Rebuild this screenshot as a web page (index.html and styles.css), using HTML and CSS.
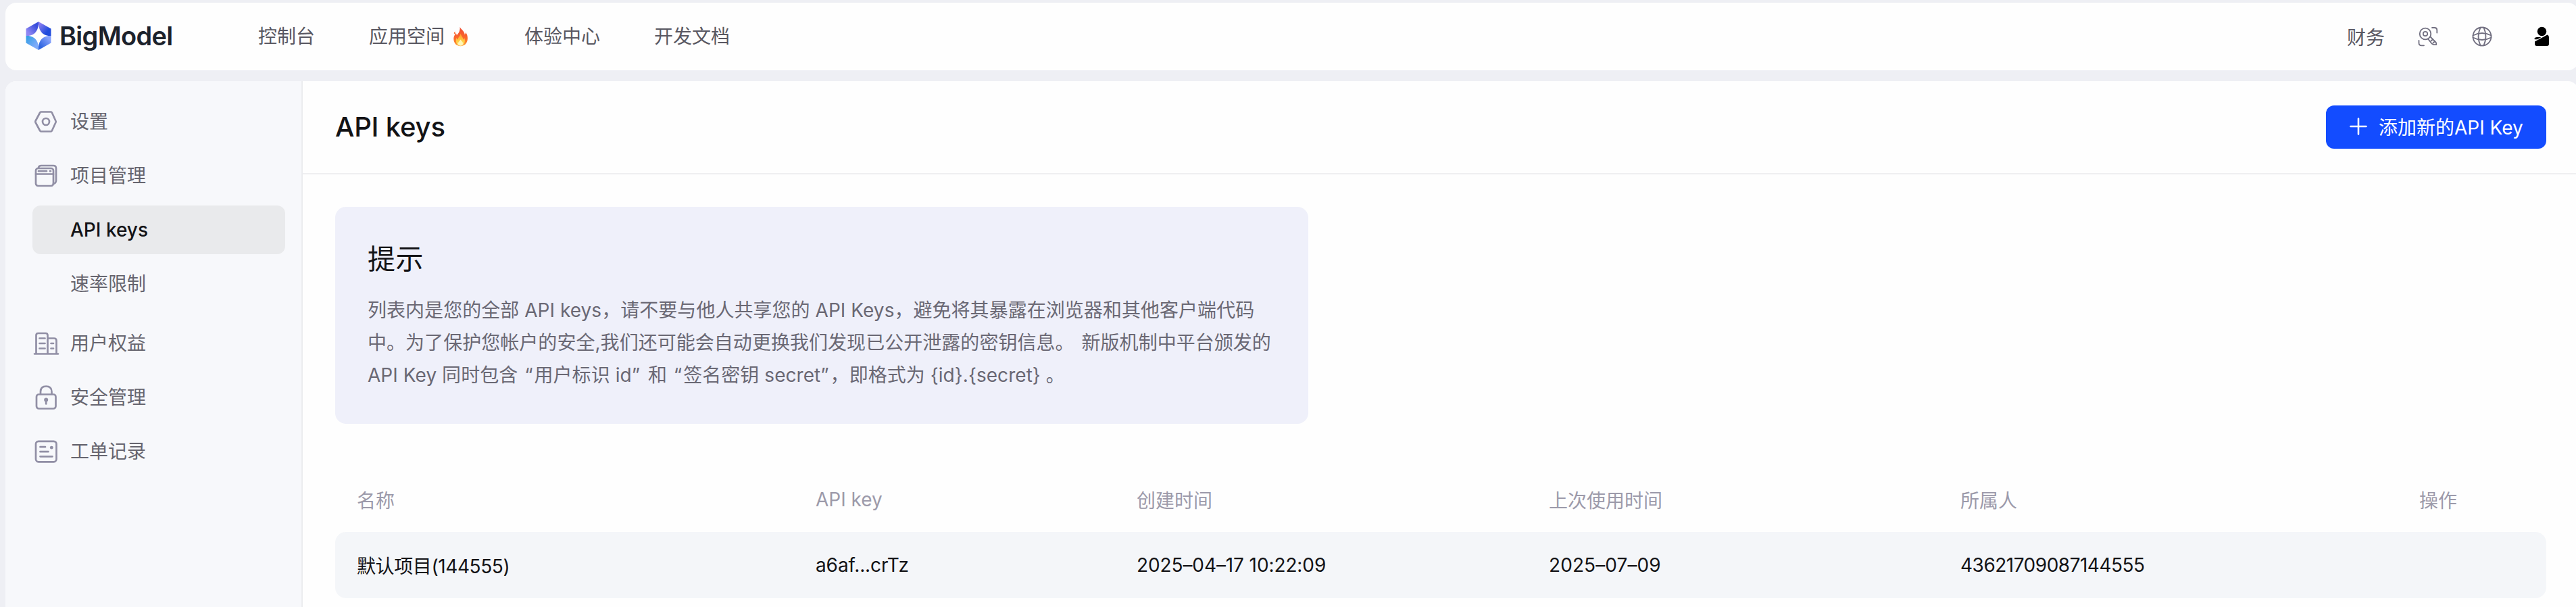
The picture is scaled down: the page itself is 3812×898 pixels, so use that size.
FILE: index.html
```html
<!DOCTYPE html>
<html lang="zh-CN">
<head>
<meta charset="utf-8">
<title>BigModel</title>
<link rel="stylesheet" href="styles.css">
</head>
<body>
<div class="app">
  <header class="topbar">
    <div class="brand">
      <svg class="brand-mark" width="38" height="42" viewBox="0 0 38 42">
        <defs>
          <linearGradient id="g1" x1="0" y1="1" x2="1" y2="0"><stop offset="0.2" stop-color="#8f86f2"/><stop offset="0.75" stop-color="#3a4fdc"/></linearGradient>
          <linearGradient id="g2" x1="0" y1="0" x2="1" y2="1"><stop offset="0.1" stop-color="#8f80f0"/><stop offset="0.7" stop-color="#1f4bdc"/></linearGradient>
          <linearGradient id="g3" x1="0" y1="0" x2="1" y2="1"><stop offset="0.1" stop-color="#379fe6"/><stop offset="0.75" stop-color="#7fabfa"/></linearGradient>
          <linearGradient id="g4" x1="1" y1="0" x2="0" y2="1"><stop offset="0.2" stop-color="#84a0fb"/><stop offset="0.8" stop-color="#2f66e0"/></linearGradient>
        </defs>
        <path fill="url(#g1)" d="M19 0V4Q17.500 19 4.500 21H0.500V10.500Z"/>
        <path fill="url(#g2)" d="M19 0V4Q20.500 19 33.500 21H37.500V10.500Z"/>
        <path fill="url(#g3)" d="M19 42V37Q17.500 23 4.500 21H0.500V31.500Z"/>
        <path fill="url(#g4)" d="M19 42V37Q20.500 23 33.500 21H37.500V31.500Z"/>
      </svg>
      <span class="brand-name">BigModel</span>
    </div>
    <nav class="nav">
      <a>控制台</a>
      <a class="hot">应用空间
        <svg width="26" height="32" viewBox="0 0 26 32">
          <defs>
            <linearGradient id="fo" x1="0" y1="0" x2="0" y2="1"><stop offset="0" stop-color="#ee4a33"/><stop offset="0.6" stop-color="#fb6a2c"/><stop offset="1" stop-color="#fda02f"/></linearGradient>
            <linearGradient id="fi" x1="0" y1="0" x2="0" y2="1"><stop offset="0" stop-color="#ff9a2e"/><stop offset="0.7" stop-color="#ffd447"/><stop offset="1" stop-color="#fff3a8"/></linearGradient>
          </defs>
          <path fill="url(#fo)" d="M12 0c1 4 8 7 8 13 1-1 1.500-2 1.500-4 2.500 3 3.500 7 3.300 11C24.500 27 20 32 13 32S1.500 27 1.500 20c0-5 2.500-7 3.500-10 1 1 1.500 2 1.500 4C10 11 12.500 6 12 0Z"/>
          <path fill="#fb6a2c" d="M4 7.500q-3 2-1.500 4.500 2-1.500 1.500-4.500Z"/>
          <path fill="url(#fi)" d="M13 11c1 4 4 6 4.500 10 1-.5 1.500-1.500 1.700-3 3 6-.7 13.500-6.200 13.500S4 25.500 6 18c.7 1.500 1.200 2.500 2.500 3C9 17 13 15 13 11Z"/>
          <path fill="#fff6b8" d="M13 21c2 3 4 4 4 6.500S15.500 31 13 31s-4-1.500-4-3.500S11 24 13 21Z"/>
        </svg></a>
      <a>体验中心</a>
      <a>开发文档</a>
    </nav>
    <div class="tools">
      <a>财务</a>
      <svg class="tool" width="32" height="32" viewBox="0 0 32 32">
        <circle cx="12" cy="12" r="8.300"/><circle cx="12" cy="12" r="3.200"/>
        <path d="M19.500 16.500 27.500 24.500Q28.500 25.500 28.300 28.200H24.500L21.500 26.500 16 19.500M20.500 22.500l1.800-1.500M23.500 25.500l1.700-1.500M22 3H25.500Q29.300 3 29.300 6.500V10.500M2.500 22V25.500Q2.500 29.300 6.500 29.300H10"/>
      </svg>
      <svg class="tool" width="32" height="32" viewBox="0 0 32 32">
        <circle cx="16" cy="16" r="13.500"/>
        <path d="M13.500 2.800Q7.500 16 13.500 29.200M18.500 2.800Q24.500 16 18.500 29.200M2.500 14.500Q16 7.500 29.500 14.500M2.500 17.500Q16 24.500 29.500 17.500"/>
      </svg>
      <svg class="avatar" width="24" height="30" viewBox="0 0 24 30">
        <circle cx="12.500" cy="7.500" r="6.700"/>
        <path d="M1.500 17.500Q3 15.500 6 16L11.500 16 6 19.300H1.800ZM2 22.500 20.500 12.500Q23 13 23 17V26Q23 29 20 29H5Q2 29 2 26Z"/>
      </svg>
    </div>
  </header>

  <div class="panel">
    <aside class="sidebar">
      <a class="item">
        <svg class="ico" width="40" height="40" viewBox="0 0 40 40"><path d="M12.500 5.500H27.500Q28.300 5.500 28.800 6.500L34.500 19Q35 20 34.500 21L28.800 33.500Q28.300 34.500 27.500 34.500H12.500Q11.700 34.500 11.200 33.500L4.500 21Q4 20 4.500 19L11.200 6.500Q11.700 5.500 12.500 5.500Z"/><circle cx="20" cy="20" r="5"/></svg>
        <span>设置</span></a>
      <a class="item">
        <svg class="ico" width="40" height="40" viewBox="0 0 40 40"><path d="M9 8Q9.500 5 13 5H31Q35 5 35 9V27Q35 31 31 32"/><rect x="5" y="9" width="26" height="26" rx="3.500"/><path d="M5 17.500H31M9 13.200H21M26 13.200H27"/></svg>
        <span>项目管理</span></a>
      <a class="item sub active"><span>API keys</span></a>
      <a class="item sub last"><span>速率限制</span></a>
      <a class="item">
        <svg class="ico" width="40" height="40" viewBox="0 0 40 40"><path d="M5.500 34.500V8Q5.500 5 8.500 5H19.500Q22.500 5 22.500 8V34.500M22.500 12.500H32Q35.500 12.500 35.500 16V34.500M3 35.500H38M10.500 12.500H18.500M10.500 20H18.500M10.500 27.500H18.500M27.500 20H31M27.500 27.500H31"/></svg>
        <span>用户权益</span></a>
      <a class="item">
        <svg class="ico" width="40" height="40" viewBox="0 0 40 40"><rect x="6" y="15.500" width="28.500" height="21" rx="3.500"/><path d="M12 15V11.500Q12 3.500 20.200 3.500T28.500 11.500V15M20.200 24V29.500"/><circle class="dot" cx="20.200" cy="23.500" r="3"/></svg>
        <span>安全管理</span></a>
      <a class="item">
        <svg class="ico" width="40" height="40" viewBox="0 0 40 40"><rect x="5" y="4.800" width="30.500" height="30.500" rx="4"/><path d="M11.500 13.200H19M11.500 20.200H23.500M11.500 27.300H29.500"/><circle class="dot" cx="28.300" cy="14.200" r="2.400"/></svg>
        <span>工单记录</span></a>
    </aside>

    <main class="main">
      <div class="head">
        <h1>API keys</h1>
        <button class="add">
          <svg width="26" height="26" viewBox="0 0 26 26"><path d="M13 1.500V24.500M1.500 13H24.500"/></svg>
          <span>添加新的API Key</span>
        </button>
      </div>
      <div class="body">
        <section class="notice">
          <h2>提示</h2>
          <p><span class="l1">列表内是您的全部 API keys，请不要与他人共享您的 API Keys，避免将其暴露在浏览器和其他客户端代码</span><br><span class="l2">中。为了保护您帐户的安全,我们还可能会自动更换我们发现已公开泄露的密钥信息。 新版机制中平台颁发的</span><br><span class="l3">API Key 同时包含<span class="q"> “</span>用户标识 id<span class="q">” </span>和<span class="q"> “</span>签名密钥 secret<span class="q">”</span>，即格式为 {id}.{secret} 。</span></p>
        </section>
        <div class="table">
          <div class="row th"><span>名称</span><span>API key</span><span>创建时间</span><span>上次使用时间</span><span>所属人</span><span>操作</span></div>
          <div class="row td"><span>默认项目(144555)</span><span class="key">a6af...crTz</span><span class="date">2025–04–17 10:22:09</span><span class="day">2025–07–09</span><span class="owner">43621709087144555</span><span></span></div>
        </div>
      </div>
    </main>
  </div>
</div>
</body>
</html>
```

FILE: styles.css
```css
* { box-sizing: border-box; margin: 0; padding: 0; }
html, body { height: 898px; overflow: hidden; }
body {
  background: #eeeff4;
  font-family: Inter, "Noto Sans CJK SC", sans-serif;
  font-size: 28px;
  letter-spacing: -0.4px;
  color: #131316;
}
.app { width: 3816px; height: 898px; padding: 4px 0 0 8px; display: flex; flex-direction: column; gap: 16px; }
a, span { white-space: nowrap; }
svg { flex: none; display: block; }

.topbar { height: 100px; flex: none; background: #fefefe; border-radius: 16px; display: flex; align-items: center; color: #585761; letter-spacing: 0; }
.brand { width: 374px; padding: 0 0 2px 30px; display: flex; align-items: center; gap: 12px; }
.brand-name { font-size: 38px; font-weight: 600; letter-spacing: -0.7px; color: #1c222c; line-height: 48px; }
.nav { display: flex; gap: 80px; }
.nav a { display: flex; align-items: center; line-height: 40px; }
.hot { gap: 12px; width: 150px; }
.hot svg { width: 23px; height: 32px; }
.tools { margin-left: auto; display: flex; align-items: center; gap: 48px; padding-right: 43px; }
.tool { fill: none; stroke: #716f80; stroke-width: 1.8; stroke-linecap: round; stroke-linejoin: round; }
.avatar { fill: #000; margin-left: 12px; }

.panel { flex: 1; display: flex; background: #fefefe; border-radius: 16px 16px 0 0; overflow: hidden; }
.sidebar { width: 440px; flex: none; background: #f7f8fb; border-right: 2px solid #ebecef; padding: 24px 24px 0 40px; display: flex; flex-direction: column; gap: 8px; }
.item { height: 72px; flex: none; display: flex; align-items: center; gap: 16px; color: #66656f; line-height: 40px; letter-spacing: 0; }
.ico { fill: none; stroke: #918fa5; stroke-width: 2.7; stroke-linecap: round; stroke-linejoin: round; }
.ico .dot { fill: #918fa5; stroke: none; }
.sub { padding-left: 56px; border-radius: 12px; }
.active { background: #e9eaec; color: #131316; font-weight: 500; }
.last { margin-bottom: 8px; }

.main { flex: 1; }
.head { height: 138px; border-bottom: 2px solid #efeff1; padding: 0 48px; display: flex; align-items: center; justify-content: space-between; }
h1 { font-size: 40px; font-weight: 500; letter-spacing: -0.2px; line-height: 56px; }
.add { width: 326px; height: 64px; border: 0; border-radius: 12px; background: #134cff; color: #fff; font: inherit; display: flex; align-items: center; padding: 0 0 2px 35px; gap: 17px; letter-spacing: 0; }
.add svg { stroke: #fff; stroke-width: 2.6; stroke-linecap: round; }
.body { padding: 48px 48px 0; }
.notice { width: 1440px; height: 321px; border-radius: 16px; background: #eff0fa; padding: 48px; }
h2 { font-size: 41px; font-weight: 400; line-height: 58px; letter-spacing: 0.5px; }
.notice p { margin-top: 23px; line-height: 48px; color: #6a6874; letter-spacing: 0.04px; }
.l2 { word-spacing: 3px; }
.l3 { letter-spacing: 0.05px; }
.q { letter-spacing: 2px; }
.table { margin-top: 64px; }
.row { display: grid; grid-template-columns: 679px 475px 610px 609px 679px 1fr; align-items: center; padding-left: 32px; }
.th { height: 96px; color: #9c9aaa; letter-spacing: 0; }
.td { height: 98px; border-radius: 16px; background: #f4f6f9; }
.key, .date { letter-spacing: -0.1px; }
.day { letter-spacing: 0.1px; }
.owner { letter-spacing: -0.5px; }
```
